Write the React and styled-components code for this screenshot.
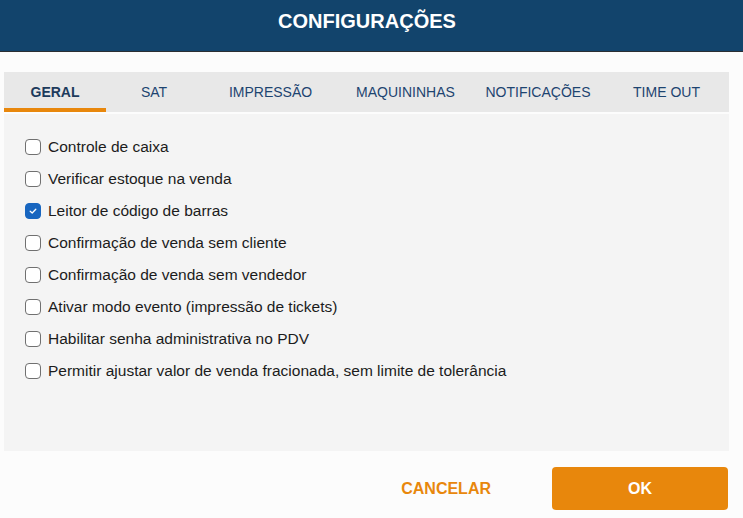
import styled, { createGlobalStyle } from "styled-components";
import { useState } from "react";

const tabs = [
  { label: "GERAL", width: 102 },
  { label: "SAT", width: 96 },
  { label: "IMPRESSÃO", width: 137 },
  { label: "MAQUININHAS", width: 133 },
  { label: "NOTIFICAÇÕES", width: 132 },
  { label: "TIME OUT", width: 125 },
];

const options = [
  { label: "Controle de caixa", checked: false },
  { label: "Verificar estoque na venda", checked: false },
  { label: "Leitor de código de barras", checked: true },
  { label: "Confirmação de venda sem cliente", checked: false },
  { label: "Confirmação de venda sem vendedor", checked: false },
  { label: "Ativar modo evento (impressão de tickets)", checked: false },
  { label: "Habilitar senha administrativa no PDV", checked: false },
  { label: "Permitir ajustar valor de venda fracionada, sem limite de tolerância", checked: false },
];

function App() {
  const [active, setActive] = useState(0);
  const [values, setValues] = useState(options.map((o) => o.checked));

  const toggle = (i) => {
    setValues((v) => v.map((x, j) => (j === i ? !x : x)));
  };

  return (
    <Page>
      <GlobalStyle />
      <Header>
        <Title>CONFIGURAÇÕES</Title>
      </Header>
      <Body>
        <TabBar>
          {tabs.map((tab, i) => (
            <Tab
              key={tab.label}
              $width={tab.width}
              $active={i === active}
              onClick={() => setActive(i)}
            >
              {tab.label}
            </Tab>
          ))}
        </TabBar>
        <Panel>
          {options.map((opt, i) => (
            <Row key={opt.label} onClick={() => toggle(i)}>
              <Box $checked={values[i]}>
                {values[i] && (
                  <svg width="10" height="10" viewBox="0 0 10 10">
                    <path
                      d="M2.2 5.2 L4.2 7 L7.8 3.2"
                      fill="none"
                      stroke="#fff"
                      strokeWidth="1.3"
                      strokeLinecap="round"
                      strokeLinejoin="round"
                    />
                  </svg>
                )}
              </Box>
              <Label>{opt.label}</Label>
            </Row>
          ))}
        </Panel>
        <Footer>
          <CancelButton>CANCELAR</CancelButton>
          <OkButton>OK</OkButton>
        </Footer>
      </Body>
    </Page>
  );
}

const GlobalStyle = createGlobalStyle`
  html, body {
    margin: 0;
    padding: 0;
    background: #fcfcfc;
    font-family: "Liberation Sans", Arial, sans-serif;
  }
`;

const Page = styled.div`
  width: 743px;
  height: 518px;
  display: flex;
  flex-direction: column;
  background: #fcfcfc;
  overflow: hidden;
`;

const Header = styled.header`
  height: 51px;
  display: flex;
  align-items: center;
  justify-content: center;
  padding-right: 9px;
  background: #12446c;
  border-bottom: 1px solid #2b2f33;
`;

const Title = styled.h1`
  margin: 0 0 8px;
  color: #ffffff;
  font-size: 20px;
  font-weight: bold;
`;

const Body = styled.div`
  flex: 1;
  display: flex;
  flex-direction: column;
  padding: 20px 14px 0 4px;
`;

const TabBar = styled.nav`
  display: flex;
  height: 40px;
  background: #e8e8e8;
`;

const Tab = styled.div`
  width: ${(p) => p.$width}px;
  display: flex;
  align-items: center;
  justify-content: center;
  padding-top: 3px;
  box-sizing: border-box;
  font-size: 14px;
  font-weight: ${(p) => (p.$active ? "bold" : "normal")};
  color: ${(p) => (p.$active ? "#1d3b5c" : "#1d4470")};
  border-bottom: 4px solid ${(p) => (p.$active ? "#e8870c" : "transparent")};
  cursor: pointer;
`;

const Panel = styled.section`
  margin-top: 2px;
  height: 337px;
  box-sizing: border-box;
  padding: 23px 0 0 21px;
  background: #f4f4f4;
  display: flex;
  flex-direction: column;
  gap: 12px;
`;

const Row = styled.label`
  display: flex;
  align-items: center;
  height: 20px;
  cursor: pointer;
`;

const Box = styled.span`
  width: 16px;
  height: 16px;
  box-sizing: border-box;
  border-radius: 4px;
  border: 1px solid ${(p) => (p.$checked ? "#1866c0" : "#707070")};
  background: ${(p) => (p.$checked ? "#1866c0" : "#ffffff")};
  display: flex;
  align-items: center;
  justify-content: center;
  margin-right: 7px;
`;

const Label = styled.span`
  font-size: 15.5px;
  color: #1c1c1c;
`;

const Footer = styled.footer`
  display: flex;
  align-items: center;
  justify-content: flex-end;
  padding: 16px 1px 0 0;
  gap: 61px;
`;

const CancelButton = styled.button`
  border: none;
  background: none;
  padding: 0;
  font-family: inherit;
  font-size: 16px;
  font-weight: bold;
  color: #e8870c;
  cursor: pointer;
`;

const OkButton = styled.button`
  width: 176px;
  height: 43px;
  border: none;
  border-radius: 4px;
  background: #e8870c;
  color: #ffffff;
  font-family: inherit;
  font-size: 16px;
  font-weight: bold;
  cursor: pointer;
`;

export default App;
